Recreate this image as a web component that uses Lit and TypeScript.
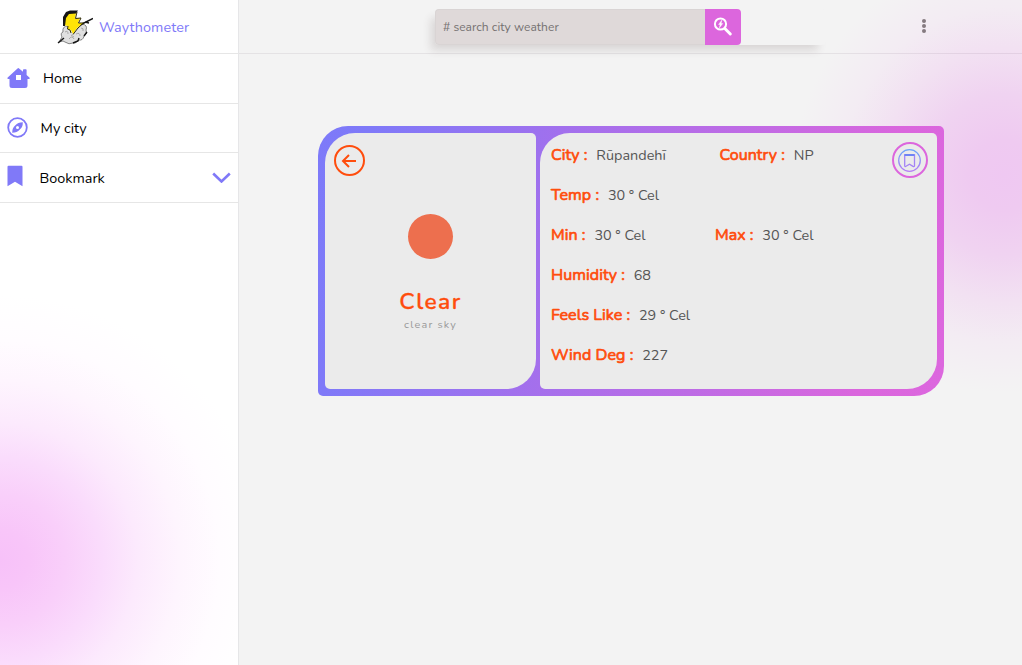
import { LitElement, html, css, svg } from "lit";
import { customElement } from "lit/decorators.js";

@customElement("app-root")
export class AppRoot extends LitElement {
  static styles = css`
    :host { display: block; height: 665px; font-family: Nunito, Lato, sans-serif; }
    * { box-sizing: border-box; }
    svg { display: block; flex: none; }
    .app { display: flex; height: 665px; overflow: hidden; }
    .side {
      width: 239px; flex: none; border-right: 1px solid #e6e6e8;
      background: radial-gradient(circle at 0 560px, #f7c1f9 0, #f8c5f9 28px, #f9cffa 65px, #fadcfc 102px, #fceafd 138px, #fef5fe 180px, #fffcff 220px, #ffffff 265px);
    }
    .brand { height: 54px; border-bottom: 1px solid #e6e6e6; display: flex; align-items: center; padding-left: 56px; color: #8079f8; }
    .brand span { font-size: 14.4px; letter-spacing: 0.1px; margin-left: 6px; }
    .row { height: 49.6px; border-bottom: 1px solid #e6e6e6; display: flex; align-items: center; padding: 0 7px; font-size: 14.4px; color: #000; }
    .row span { flex: 1; }
    .home span { padding-left: 13px; }
    .city span { padding-left: 12.6px; }
    .mark span { padding: 2px 0 0 16.6px; }
    .main {
      flex: 1; display: flex; flex-direction: column;
      background: radial-gradient(ellipse 210px 218px at 765px 175px, #efc8f2 0, #efcaf1 16%, #f0d3f1 37%, #f2e1f2 58%, #f3ecf3 77%, #f3f3f3 100%) #f3f3f3;
    }
    .top { height: 54px; border-bottom: 1px solid rgba(80, 50, 80, 0.09); padding: 9px 0 0 196px; display: flex; }
    .search { width: 391px; height: 36px; display: flex; border-radius: 4px; background: rgb(243, 243, 243); box-shadow: -6px 7px 8px -2px rgba(80, 60, 60, 0.16); }
    .field { width: 270px; border: 1px solid #d9d4d4; border-right: 0; border-radius: 4px 0 0 4px; background: #dfd9d9; color: #757171; font-size: 12px; letter-spacing: 0.04px; padding-left: 7px; display: flex; align-items: center; }
    .go { width: 36px; background: #dc66dd; border-radius: 0 4px 4px 0; display: grid; place-items: center; }
    .dots { margin: 9px 0 0 95px; }
    .card {
      margin: 72px 0 0 79px; width: 626px; height: 270px; padding: 7px; display: flex; gap: 4px;
      border-radius: 30px 5px 30px 5px;
      background: linear-gradient(100deg, #7d7af9 0, #7f79f8 8%, #a170ed 36%, #bd6be5 62%, #da66dd 87%, #dc67de 100%);
    }
    .pane { background: #ebebeb; border-radius: 30px 5px 30px 5px; }
    .sky { width: 211px; display: flex; flex-direction: column; align-items: center; }
    .back { align-self: flex-start; margin: 12px 0 0 9px; }
    .sun { width: 45px; height: 45px; border-radius: 50%; background: #ed6f4e; margin-top: 38px; }
    .state { margin-top: 27px; font-size: 22.8px; line-height: 32px; font-weight: 600; letter-spacing: 1.4px; color: #ff4d0d; -webkit-text-stroke: 0.3px #ff4d0d; }
    .desc { font-size: 10.8px; line-height: 14px; letter-spacing: 1.2px; color: #999; }
    .info { width: 397px; display: flex; justify-content: space-between; padding: 2px 9px 0 11px; }
    .facts { width: 262.5px; }
    .line { height: 40px; display: flex; justify-content: space-between; align-items: center; }
    .fact { display: flex; align-items: baseline; gap: 8.8px; white-space: nowrap; }
    .label { font-size: 16px; letter-spacing: 0.06px; font-weight: 400; color: #ff4d0d; -webkit-text-stroke: 0.7px #ff4d0d; }
    .value { font-size: 14.4px; color: #555; }
    .save { margin-top: 7px; }
  `;

  private fact(label: string, value: string) {
    return html`<div class="fact"><span class="label">${label} :</span><span class="value">${value}</span></div>`;
  }

  private logo() {
    return svg`<svg width="37" height="37" viewBox="0 0 37 37">
      <path d="M12 18Q6 18 7 24 4 25 6 29L3 34Q8 32 9 34 13 37 17 35 20 36 22 32 27 33 28 28 32 26 30 22 32 17 26 16L19 16Z" fill="#e0e0e0" stroke="#777" stroke-width=".9"/>
      <path d="M9 24Q12 22 12 26M13 31Q16 27 18 31M20 26Q24 24 24 28M25 20Q28 20 27 23M15 27 18 29" fill="none" stroke="#999" stroke-width=".8"/>
      <path d="M2 35 8 30M17 35 22 33 23 30M28 28 31 24M24 17 37 10.500M29 14 33 15" fill="none" stroke="#151515" stroke-width="1.400"/>
      <path d="M11 5 20 5 19 11 24 10 22 15 27 15 21 20 17 26 15 22 11 21 12 18 7 17Z" fill="#ffe407"/>
      <path d="M7 18 7 9 10 4 14 2.500 22 2.500 20 5.500 13 6 10 10 9 18Z" fill="#151515"/>
      <path d="M21 4 19.500 10.500 25 10 22.500 15 27.500 15 22 20 17 26.500M12 18 11.500 21 14 22 15 25" fill="none" stroke="#302b05"/>
    </svg>`;
  }

  render() {
    return html`<div class="app">
      <aside class="side">
        <div class="brand">${this.logo()}<span>Waythometer</span></div>
        <div class="row home">
          <svg width="23" height="22" viewBox="0 0 23 22"><path fill="#8079f8" fill-rule="evenodd" d="M11.500 1 16 4.700V3q0-.8.8-.8h2q.8 0 .8.8v5l2.800 2.600q.8 1-.3 1.400H20.500v6.500q0 2.500-2.500 2.500h-13Q2.500 21 2.500 18.500V12H1q-1-.5-.3-1.400L10.500 1.500q.5-.5 1-.5zM9 8v5h5V8z"/></svg>
          <span>Home</span>
        </div>
        <div class="row city">
          <svg width="21" height="21" viewBox="0 0 21 21"><circle cx="10.500" cy="10.500" r="9.300" fill="none" stroke="#8079f8" stroke-width="1.800"/><path fill="#8079f8" fill-rule="evenodd" d="M15.800 5.200q.2 5-3.200 7.500-2.400 3-7.400 3.100-.2-5 3.200-7.500 2.400-3 7.400-3.100zM10.500 9a1.500 1.500 0 1 0 0 3 1.500 1.500 0 0 0 0-3z"/></svg>
          <span>My city</span>
        </div>
        <div class="row mark">
          <svg width="16" height="24" viewBox="0 0 16 24"><path fill="#8079f8" d="M1.500 .7h13q1 0 1 1v19.500L8 16.700.5 21.200V1.700q0-1 1-1z"/></svg>
          <span>Bookmark</span>
          <svg width="19" height="12" viewBox="0 0 19 12"><path fill="none" stroke="#8079f8" stroke-width="2.600" d="m1.200 2.500 8.300 8 8.300-8"/></svg>
        </div>
      </aside>
      <main class="main">
        <header class="top">
          <div class="search">
            <div class="field"># search city weather</div>
            <div class="go">
              <svg width="20" height="20" viewBox="0 0 20 20" fill="none" stroke="#fff"><circle cx="7.500" cy="7" r="5.600" stroke-width="2"/><path stroke-width="3" stroke-linecap="round" d="m12.300 12 5 5"/><path fill="#fff" stroke-width=".5" d="M8.800 3.200 5.600 7.500h1.600l-.8 3.300L9.700 6.600H8z"/></svg>
            </div>
          </div>
          <svg class="dots" width="6" height="16" viewBox="0 0 6 16" fill="#857a80"><circle cx="3" cy="3" r="2"/><circle cx="3" cy="8" r="2"/><circle cx="3" cy="13" r="2"/></svg>
        </header>
        <section class="card">
          <div class="pane sky">
            <svg class="back" width="31" height="31" viewBox="0 0 31 31" fill="none" stroke="#ff4d0d" stroke-width="2"><circle cx="15.500" cy="15.500" r="14.500"/><path d="M22 16H9m6-6-6 6 6 6"/></svg>
            <div class="sun"></div>
            <div class="state">Clear</div>
            <div class="desc">clear sky</div>
          </div>
          <div class="pane info">
            <div class="facts">
              <div class="line">${this.fact("City", "Rūpandehī")}${this.fact("Country", "NP")}</div>
              <div class="line">${this.fact("Temp", "30 ° Cel")}</div>
              <div class="line">${this.fact("Min", "30 ° Cel")}${this.fact("Max", "30 ° Cel")}</div>
              <div class="line">${this.fact("Humidity", "68")}</div>
              <div class="line">${this.fact("Feels Like", "29 ° Cel")}</div>
              <div class="line">${this.fact("Wind Deg", "227")}</div>
            </div>
            <svg class="save" width="36" height="36" viewBox="0 0 36 36" fill="none">
              <defs><linearGradient id="ink" x1="0" y1="0" x2="0" y2="1"><stop stop-color="#6aa5fa"/><stop offset="1" stop-color="#b57df5"/></linearGradient></defs>
              <circle cx="18" cy="18" r="17" stroke="#dc66dd" stroke-width="2"/>
              <circle cx="17.500" cy="18.500" r="10.800" stroke="url(#ink)" stroke-width="1.300"/>
              <path d="M12.700 13v10.500q0 1.500 1.300.8l3.500-2 3.500 2q1.500.7 1.500-.8V13z" stroke="#a483f5" stroke-width="1.300"/>
              <path d="M12.500 13h10" stroke="#6d84f5" stroke-width="2"/>
            </svg>
          </div>
        </section>
      </main>
    </div>`;
  }
}
